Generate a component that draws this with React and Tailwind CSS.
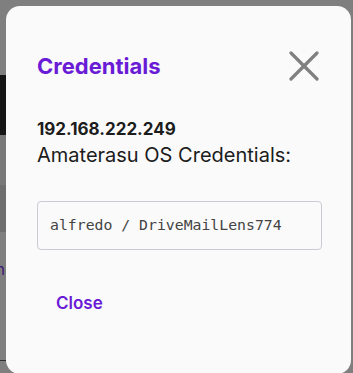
export default function App() {
  return (
    <div className="relative w-[353px] h-[373px] overflow-hidden bg-[#7f7f7f] font-['Inter',sans-serif]">
      {/* page behind the dim overlay */}
      <div className="flex flex-col w-[6px]">
        <div className="h-[75px] bg-[#7f7f7f]" />
        <div className="h-[60px] bg-[#151515]" />
        <div className="h-[50px] bg-[#787878]" />
        <div className="h-[47px] bg-[#6e6e6e]" />
        <div className="h-[32px] bg-[#7f7f7f]" />
        <div className="h-[12px] text-[15px] leading-[12px] text-[#3b1577] -ml-[4px]">n</div>
        <div className="h-[84px] bg-[#7f7f7f]" />
        <div className="h-px bg-[#2e2e2e]" />
      </div>

      <div className="absolute left-[6px] top-[6px] w-[345px] h-[368px] rounded-[14px] bg-[#fafafa] px-[31px]">
        <div className="flex items-center justify-between pt-[45px]">
          <h2 className="text-[22px] leading-[28px] font-bold text-[#6a1bd6]">Credentials</h2>
          <button className="mr-[1px] text-[#808080]" aria-label="close">
            <svg width="30" height="30" viewBox="0 0 30 30" fill="none" stroke="currentColor" strokeWidth="3.2" strokeLinecap="round">
              <line x1="2" y1="2" x2="28" y2="28" />
              <line x1="28" y1="2" x2="2" y2="28" />
            </svg>
          </button>
        </div>

        <div className="mt-[36px]">
          <p className="text-[17px] leading-[24px] font-bold text-[#1c1c1c]">192.168.222.249</p>
          <p className="text-[20px] leading-[28px] text-[#1c1c1c]">Amaterasu OS Credentials:</p>
        </div>

        <div className="mt-[32px] h-[49px] w-[285px] flex items-center rounded-[4px] border border-[#cbcbd3] px-[12px]">
          <span className="font-['DejaVu_Sans_Mono',monospace] text-[14.8px] text-[#444444]">alfredo / DriveMailLens774</span>
        </div>

        <button className="mt-[41px] ml-[19px] text-[17px] font-semibold text-[#6a1bd6]">Close</button>
      </div>
    </div>
  );
}
